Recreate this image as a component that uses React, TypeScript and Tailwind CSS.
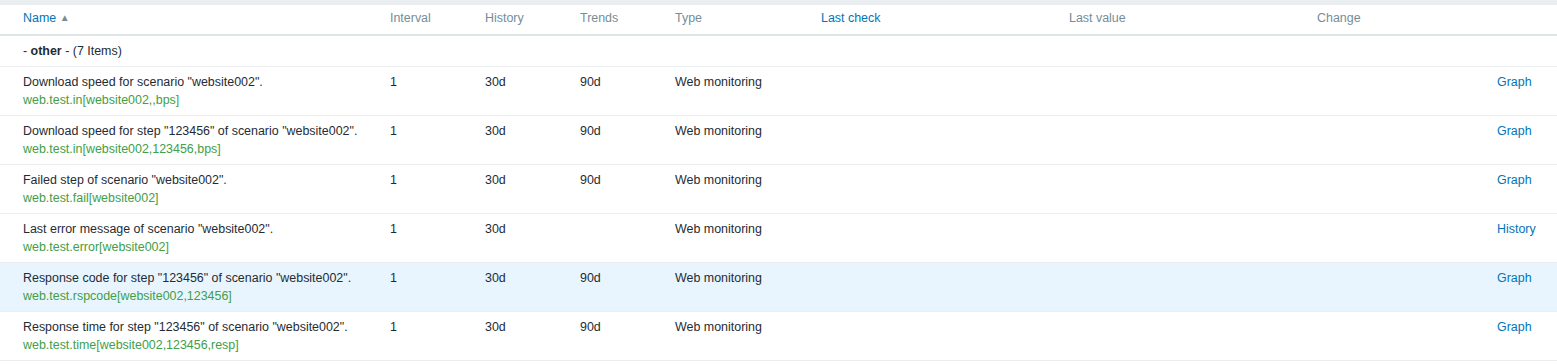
import React from 'react';

type Item = {
  name: string;
  key: string;
  trends: string;
  action: string;
  selected?: boolean;
};

const items: Item[] = [
  { name: 'Download speed for scenario "website002".', key: 'web.test.in[website002,,bps]', trends: '90d', action: 'Graph' },
  { name: 'Download speed for step "123456" of scenario "website002".', key: 'web.test.in[website002,123456,bps]', trends: '90d', action: 'Graph' },
  { name: 'Failed step of scenario "website002".', key: 'web.test.fail[website002]', trends: '90d', action: 'Graph' },
  { name: 'Last error message of scenario "website002".', key: 'web.test.error[website002]', trends: '', action: 'History' },
  { name: 'Response code for step "123456" of scenario "website002".', key: 'web.test.rspcode[website002,123456]', trends: '90d', action: 'Graph', selected: true },
  { name: 'Response time for step "123456" of scenario "website002".', key: 'web.test.time[website002,123456,resp]', trends: '90d', action: 'Graph' },
];

export default function App() {
  return (
    <div
      className="w-[1557px] h-[364px] bg-white text-[12.45px] text-[#1f2c33] overflow-hidden"
      style={{ fontFamily: 'Arial, "Liberation Sans", sans-serif' }}
    >
      <div className="h-[5px] bg-[#ebeef0]" />
      <table className="w-full border-collapse table-fixed">
        <colgroup>
          <col className="w-[385px]" />
          <col className="w-[95px]" />
          <col className="w-[95px]" />
          <col className="w-[95px]" />
          <col className="w-[146px]" />
          <col className="w-[248px]" />
          <col className="w-[248px]" />
          <col className="w-[180px]" />
          <col />
        </colgroup>
        <thead>
          <tr className="h-[30px] border-b-2 border-[#dfe4e7] text-left">
            <th className="pl-[23px] pb-[2px] font-normal text-[#0275b8]">
              Name <span className="text-[#768d99] text-[10px] align-[1px]">▲</span>
            </th>
            <th className="pl-[5px] pb-[2px] font-normal text-[#768d99]">Interval</th>
            <th className="pl-[5px] pb-[2px] font-normal text-[#768d99]">History</th>
            <th className="pl-[5px] pb-[2px] font-normal text-[#768d99]">Trends</th>
            <th className="pl-[5px] pb-[2px] font-normal text-[#768d99]">Type</th>
            <th className="pl-[5px] pb-[2px] font-normal text-[#0275b8]">Last check</th>
            <th className="pl-[5px] pb-[2px] font-normal text-[#768d99]">Last value</th>
            <th className="pl-[5px] pb-[2px] font-normal text-[#768d99]">Change</th>
            <th />
          </tr>
        </thead>
        <tbody>
          <tr className="h-[31px] border-b border-[#ebeef0]">
            <td colSpan={9} className="pl-[23px] pt-[1px]">
              - <span className="font-bold">other</span> - (7 Items)
            </td>
          </tr>
          {items.map((item) => (
            <tr
              key={item.key}
              className={`h-[49px] border-b border-[#ebeef0] align-top leading-[18px] ${
                item.selected ? 'bg-[#e8f5ff]' : ''
              }`}
            >
              <td className="pl-[23px] pt-[6px]">
                <div>{item.name}</div>
                <div className="text-[#429e47]">{item.key}</div>
              </td>
              <td className="pl-[5px] pt-[6px]">1</td>
              <td className="pl-[5px] pt-[6px]">30d</td>
              <td className="pl-[5px] pt-[6px]">{item.trends}</td>
              <td className="pl-[5px] pt-[6px]">Web monitoring</td>
              <td className="pl-[5px] pt-[6px]" />
              <td className="pl-[5px] pt-[6px]" />
              <td className="pl-[5px] pt-[6px]" />
              <td className="pl-[5px] pt-[6px] text-[#0275b8]">{item.action}</td>
            </tr>
          ))}
        </tbody>
      </table>
    </div>
  );
}
